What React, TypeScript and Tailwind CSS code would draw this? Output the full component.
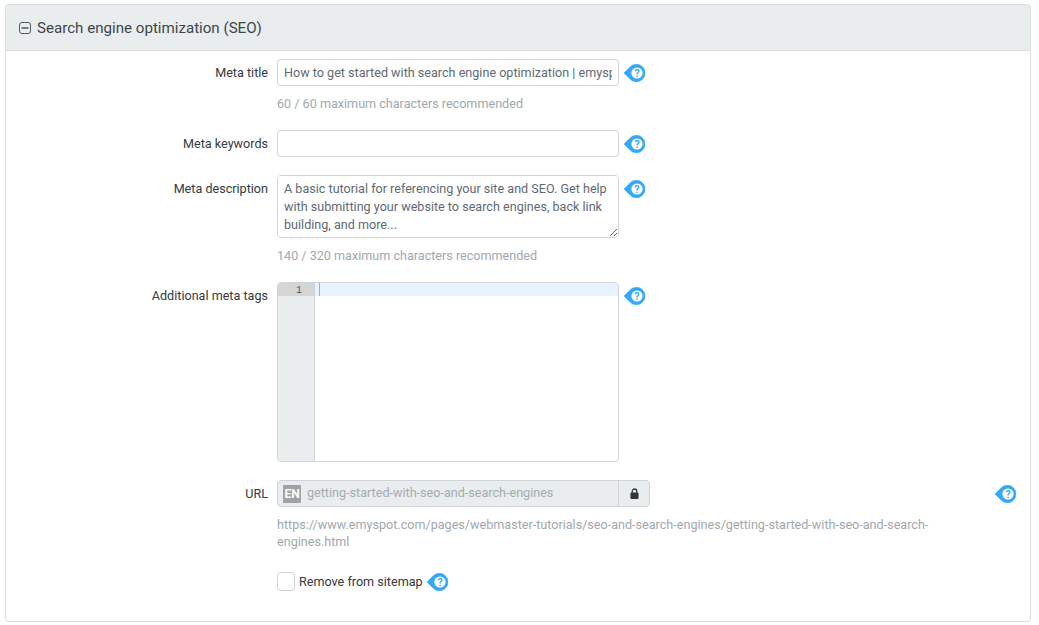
import React from 'react';

const HelpIcon: React.FC = () => (
  <svg viewBox="0 0 21 18" className="h-[18px] w-[21px] shrink-0">
    <path d="M0 9 L5.5 3.6 A8.7 8.7 0 1 1 5.5 14.4 Z" fill="#33a9f7" stroke="#33a9f7" strokeWidth="0.6" strokeLinejoin="round" />
    <circle cx="13" cy="9" r="5.6" fill="#fff" />
    <text x="13" y="12.6" textAnchor="middle" fontSize="10.5" fontWeight="700" fill="#33a9f7" fontFamily="Roboto, sans-serif">?</text>
  </svg>
);

const Row: React.FC<{ label: string; className?: string; children: React.ReactNode }> = ({ label, className, children }) => (
  <div className={`flex items-start ${className ?? ''}`}>
    <label className="w-[262px] shrink-0 pt-[4px] text-right leading-[20px] text-[#333a40]">{label}</label>
    <div className="ml-[9px] min-w-0 flex-1">{children}</div>
  </div>
);

const Hint: React.FC<{ children: React.ReactNode }> = ({ children }) => (
  <p className="mt-[9px] max-w-[660px] text-[12.6px] leading-[17px] text-[#a0a8ae]">{children}</p>
);

const fieldClass = 'w-[342px] rounded-[4px] border border-[#ced4da] bg-white px-[6px] text-[12.6px] text-[#5f6a72] outline-none';

const App: React.FC = () => {
  return (
    <div className="h-[625px] w-[1039px] overflow-hidden bg-white pt-[4px] pl-[5px] font-['Roboto',sans-serif] text-[12.6px]">
      <div className="h-[618px] w-[1026px] rounded-[3px] border border-[#dadfe2]">
        <div className="flex h-[46px] items-center border-b border-[#dadfe2] bg-[#e9eded] pl-[13px]">
          <svg viewBox="0 0 12 12" className="h-[12px] w-[12px] text-[#4f5a63]">
            <rect x="0.5" y="0.5" width="11" height="11" rx="2.5" fill="none" stroke="currentColor" />
            <path d="M2.5 6 H9.5" stroke="currentColor" strokeWidth="1.5" />
          </svg>
          <span className="ml-[6px] pt-[1px] text-[15.12px] leading-[20px] text-[#3d464d]">Search engine optimization (SEO)</span>
        </div>

        <div className="pt-[8px]">
          <Row label="Meta title">
            <div className="flex items-center gap-[5px]">
              <input readOnly value="How to get started with search engine optimization | emyspot" className={`${fieldClass} h-[27px]`} />
              <HelpIcon />
            </div>
            <Hint>60 / 60 maximum characters recommended</Hint>
          </Row>

          <Row label="Meta keywords" className="mt-[18px]">
            <div className="flex items-center gap-[5px]">
              <input readOnly value="" className={`${fieldClass} h-[27px]`} />
              <HelpIcon />
            </div>
          </Row>

          <Row label="Meta description" className="mt-[18px]">
            <div className="flex items-start gap-[5px]">
              <textarea
                readOnly
                value="A basic tutorial for referencing your site and SEO. Get help with submitting your website to search engines, back link building, and more..."
                className={`${fieldClass} block h-[63px] py-[4px] leading-[18px]`}
              />
              <div className="pt-[5px]">
                <HelpIcon />
              </div>
            </div>
            <Hint>140 / 320 maximum characters recommended</Hint>
          </Row>

          <Row label="Additional meta tags" className="mt-[18px]">
            <div className="flex items-start gap-[5px]">
              <div className="flex h-[180px] w-[342px] overflow-hidden rounded-[4px] border border-[#ced4da]">
                <div className="w-[37px] shrink-0 border-r border-[#ced4da] bg-[#e9eded]">
                  <div className="h-[13px] bg-[#d5d5d5] pt-[1px] pr-[12px] text-right font-['Liberation_Mono',monospace] text-[10px] leading-[13px] text-[#555]">1</div>
                </div>
                <div className="flex-1">
                  <div className="flex h-[13px] bg-[#e8f2ff] pl-[4px]">
                    <span className="h-[13px] w-[1px] bg-[#9fb0c4]" />
                  </div>
                </div>
              </div>
              <div className="pt-[5px]">
                <HelpIcon />
              </div>
            </div>
          </Row>

          <Row label="URL" className="mt-[18px]">
            <div className="flex items-center justify-between pr-[14px]">
              <div className="flex h-[27px] w-[373px] rounded-[4px] border border-[#ced4da] bg-[#e9eded]">
                <div className="flex flex-1 items-center pl-[5px]">
                  <span className="flex h-[18px] w-[18px] items-center justify-center bg-[#9fa3a6] text-[12px] font-bold text-white">EN</span>
                  <span className="ml-[6px] text-[12.6px] text-[#a4acb2]">getting-started-with-seo-and-search-engines</span>
                </div>
                <div className="flex w-[31px] items-center justify-center border-l border-[#ced4da]">
                  <svg viewBox="0 0 10 12" className="h-[11px] w-[9px]">
                    <path d="M2.5 5.5 V3.5 A2.5 2.5 0 0 1 7.5 3.5 V5.5" fill="none" stroke="#2f353a" strokeWidth="1.4" />
                    <rect x="0.5" y="5" width="9" height="7" rx="1" fill="#2f353a" />
                  </svg>
                </div>
              </div>
              <HelpIcon />
            </div>
            <Hint>https://www.emyspot.com/pages/webmaster-tutorials/seo-and-search-engines/getting-started-with-seo-and-search-engines.html</Hint>
          </Row>

          <div className="mt-[22px] ml-[271px] flex items-center">
            <span className="h-[19px] w-[18px] rounded-[4px] border border-[#ced4da] bg-white" />
            <span className="ml-[4px] pt-[1px] text-[#333a40]">Remove from sitemap</span>
            <span className="ml-[4px]">
              <HelpIcon />
            </span>
          </div>
        </div>
      </div>
    </div>
  );
};

export default App;
